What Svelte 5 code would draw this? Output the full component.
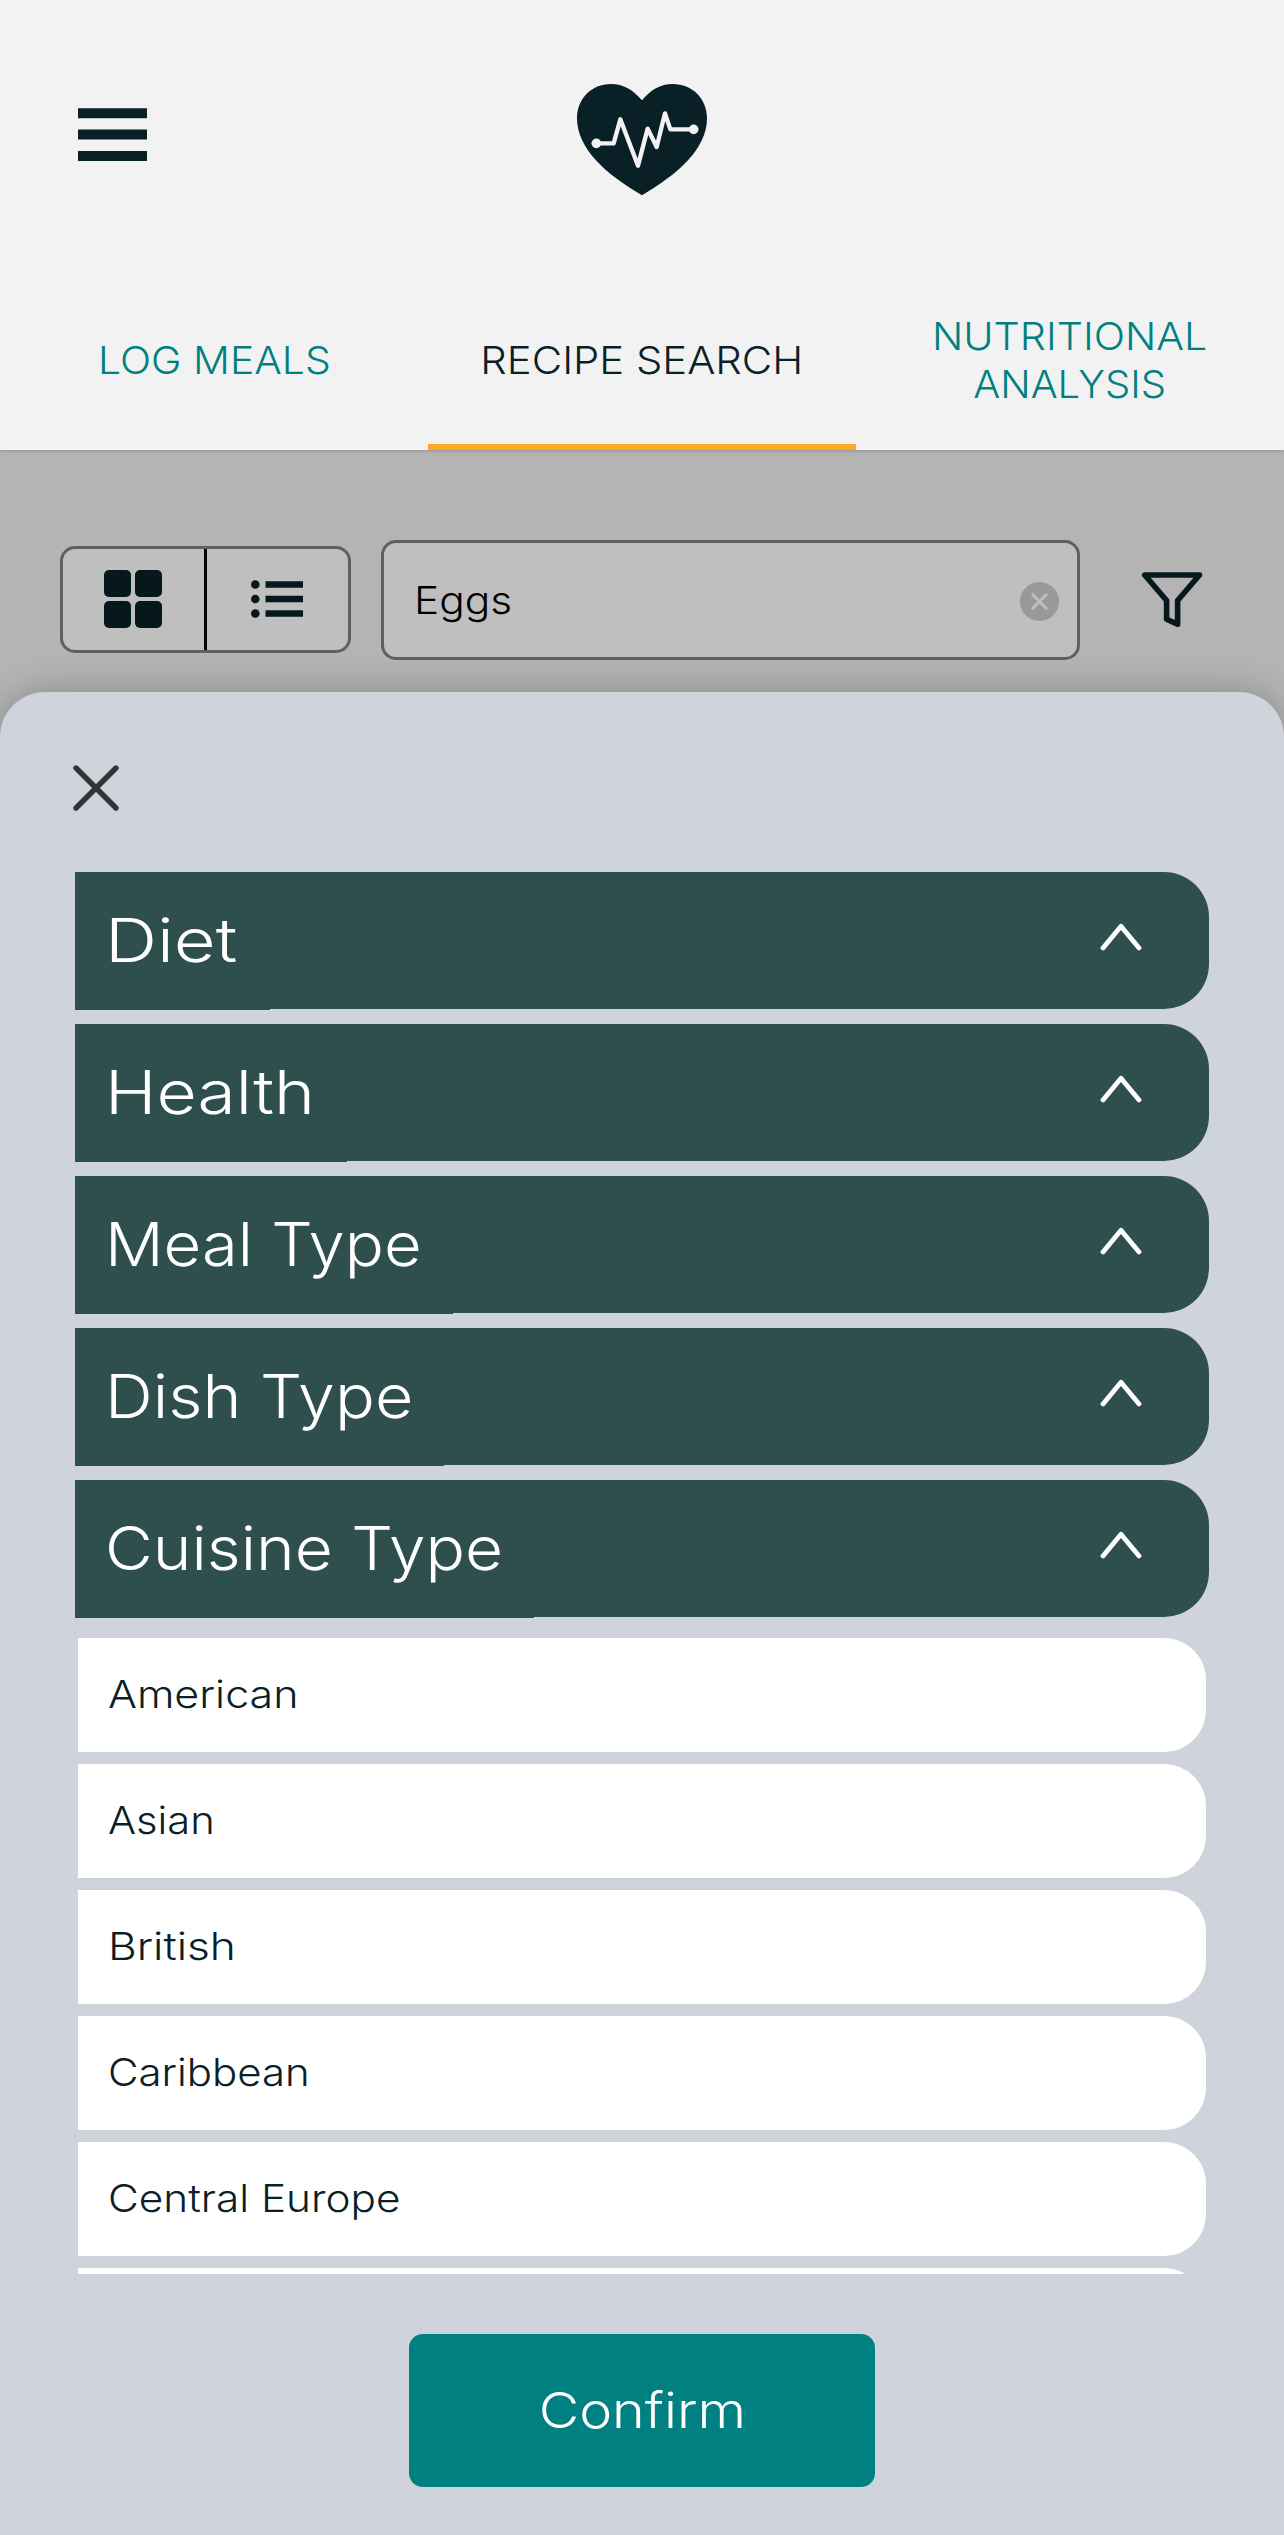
<script>
  // `stretch` widens each label horizontally; `width` is the title block's width
  const tabs = [
    { lines: [{ text: 'LOG MEALS', stretch: 1.063 }] },
    { lines: [{ text: 'RECIPE SEARCH', stretch: 1.085 }], active: true },
    { lines: [{ text: 'NUTRITIONAL', stretch: 1.07 }, { text: 'ANALYSIS', stretch: 1.04 }] }
  ];
  const sections = [
    { name: 'Diet', stretch: 1.185, width: 195 },
    { name: 'Health', stretch: 1.14, width: 272 },
    { name: 'Meal Type', stretch: 1.067, width: 378 },
    { name: 'Dish Type', stretch: 1.087, width: 369 },
    { name: 'Cuisine Type', stretch: 1.077, width: 459 }
  ];
  const cuisines = [
    { name: 'American', stretch: 1.115 },
    { name: 'Asian', stretch: 1.083 },
    { name: 'British', stretch: 1.15 },
    { name: 'Caribbean', stretch: 1.088 },
    { name: 'Central Europe', stretch: 1.098 }
  ];
</script>

<div class="page">
  <header>
    <div class="brand-row">
      <svg class="menu" width="69" height="54" viewBox="0 0 69 54">
        <path d="M0 .3h69v10H0zM0 21.5h69v10H0zM0 43h69v10H0z" />
      </svg>
      <svg class="heart" width="132" height="114" viewBox="438 129 396 342">
        <path
          class="shape"
          d="M636 181C610 150 580 132 543 132C485 132 441 176 441 235C441 327 530 404 636 466C742 404 831 327 831 235C831 176 787 132 728 132C692 132 661 150 636 181Z"
        />
        <path class="pulse" d="M499 310H551L571 238L624 377L653 266L680 321L705 220L721 268H791" />
        <circle cx="499" cy="310" r="14.5" />
        <circle cx="791" cy="268" r="14.5" />
      </svg>
    </div>
    <nav>
      {#each tabs as tab}
        <div class="tab" class:active={tab.active}>
          {#each tab.lines as line}
            <span style:--stretch={line.stretch}>{line.text}</span>
          {/each}
        </div>
      {/each}
    </nav>
  </header>

  <div class="toolbar">
    <div class="toggle">
      <div class="cell grid">
        <svg width="58" height="58" viewBox="0 0 58 58">
          <rect width="27" height="27" rx="5" />
          <rect x="31" width="27" height="27" rx="5" />
          <rect y="31" width="27" height="27" rx="5" />
          <rect x="31" y="31" width="27" height="27" rx="5" />
        </svg>
      </div>
      <div class="cell rows">
        <svg width="52" height="38" viewBox="0 0 52 38">
          <circle cx="4.3" cy="4.5" r="4.3" />
          <circle cx="4.3" cy="19" r="4.3" />
          <circle cx="4.3" cy="33.5" r="4.3" />
          <path d="M14.5 1.2H52v6.6H14.5zM14.5 15.7H52v6.6H14.5zM14.5 30.2H52v6.6H14.5z" />
        </svg>
      </div>
    </div>
    <div class="search">
      <span class="query">Eggs</span>
      <svg width="39" height="39" viewBox="0 0 39 39">
        <circle cx="19.5" cy="19.5" r="19.5" />
        <path d="M12.7 12.7l13.6 13.6M26.3 12.7L12.7 26.3" />
      </svg>
    </div>
    <svg class="funnel" width="62" height="58" viewBox="0 0 62 58">
      <path d="M3.7 4H58.5L36.6 29.5V53.3L25.6 48.3V29.5Z" />
    </svg>
  </div>

  <div class="sheet">
    <svg class="close" width="46" height="46" viewBox="0 0 46 46">
      <path d="M3 3L43 43M43 3L3 43" />
    </svg>
    <div class="list">
      {#each sections as section}
        <div class="section">
          <div class="title" style:width="{section.width}px">
            <span style:--stretch={section.stretch}>{section.name}</span>
          </div>
          <svg width="42" height="28" viewBox="0 0 42 28">
            <path d="M3 25L21 3.2L39 25" />
          </svg>
        </div>
      {/each}
      <div class="options">
        {#each cuisines as cuisine}
          <div class="option"><span style:--stretch={cuisine.stretch}>{cuisine.name}</span></div>
        {/each}
        <div class="option"></div>
      </div>
    </div>
    <div class="confirm"><span>Confirm</span></div>
  </div>
</div>

<style>
  :global(body) {
    margin: 0;
    background: #b4b4b4;
  }
  .page {
    width: 1284px;
    height: 2535px;
    display: flex;
    flex-direction: column;
    overflow: hidden;
    background: #b4b4b4;
    font-family: Inter, 'Liberation Sans', sans-serif;
    font-weight: 300;
    font-size: 38.5px;
    color: #0a2027;
  }
  svg {
    display: block;
    flex: none;
  }
  span {
    display: inline-block;
    white-space: nowrap;
    transform: scaleX(var(--stretch, 1));
    transform-origin: left center;
  }
  header {
    height: 450px;
    flex: none;
    background: #f2f2f2;
    box-shadow: 0 0 4px rgba(0, 0, 0, 0.3);
    z-index: 1;
  }
  .brand-row {
    height: 270px;
    display: grid;
    grid-template-columns: 1fr 132px 1fr;
    align-items: start;
  }
  .menu {
    margin: 108px 0 0 78px;
    fill: #0a2027;
  }
  .heart {
    margin-top: 83px;
  }
  .heart .shape {
    fill: #0a2027;
  }
  .heart circle {
    fill: #f2f2f2;
  }
  .heart .pulse {
    fill: none;
    stroke: #f2f2f2;
    stroke-width: 13;
    stroke-linejoin: round;
  }
  nav {
    height: 180px;
    display: grid;
    grid-template-columns: repeat(3, 1fr);
  }
  .tab {
    display: flex;
    flex-direction: column;
    align-items: center;
    justify-content: center;
    box-sizing: border-box;
    border-bottom: 6px solid transparent;
    padding-top: 6px;
    line-height: 48px;
    color: #008080;
  }
  .tab span,
  .confirm span {
    transform-origin: center;
  }
  .tab.active {
    color: #0a2027;
    border-color: #ffa726;
  }
  .toolbar {
    height: 242px;
    box-sizing: border-box;
    padding: 90px 81px 0 60px;
    flex: none;
    display: flex;
    align-items: flex-start;
  }
  .toggle {
    width: 291px;
    height: 107px;
    margin-top: 6px;
    box-sizing: border-box;
    border: 3px solid #606060;
    border-radius: 15px;
    background: #bfbfbf;
    display: flex;
    fill: #06181c;
  }
  .cell {
    width: 141px;
    box-sizing: border-box;
    padding-right: 2px;
    display: flex;
    align-items: center;
    justify-content: center;
  }
  .cell.grid {
    width: 144px;
    padding-right: 1px;
    padding-bottom: 1px;
    border-right: 3px solid #000;
  }
  .cell.rows {
    padding-bottom: 1px;
  }
  .search {
    width: 699px;
    height: 120px;
    margin-left: 30px;
    box-sizing: border-box;
    border: 3px solid #606060;
    border-radius: 15px;
    background: #bfbfbf;
    color: #000;
    padding: 2px 18px 0 30px;
    display: flex;
    align-items: center;
    justify-content: space-between;
  }
  .query {
    --stretch: 1.1;
    padding-bottom: 2px;
  }
  .search circle {
    fill: #999;
  }
  .search path {
    stroke: #bfbfbf;
    stroke-width: 3;
    stroke-linecap: round;
  }
  .funnel {
    margin: 31px 0 0 61px;
    fill: none;
    stroke: #06181c;
    stroke-width: 5.6;
    stroke-linejoin: round;
  }
  .sheet {
    flex: 1;
    display: flex;
    flex-direction: column;
    background: #cfd3db;
    border-radius: 45px 45px 0 0;
    box-shadow: 0 0 36px rgba(0, 0, 0, 0.24);
    padding: 73px 75px 0;
  }
  .close {
    margin-left: -2px;
    fill: none;
    stroke: #333;
    stroke-width: 5.4;
    stroke-linecap: round;
  }
  .list {
    height: 1402px;
    margin-top: 61px;
    overflow: hidden;
  }
  .section {
    height: 137px;
    margin-bottom: 15px;
    background: #2f4f4f;
    border-radius: 0 45px 45px 0;
    display: flex;
    justify-content: space-between;
    color: #fff;
    font-size: 61px;
  }
  .title {
    height: 138px;
    line-height: 137px;
    box-sizing: border-box;
    padding-left: 30px;
    background: #2f4f4f;
  }
  .section svg {
    margin: 51px 67px 0 0;
    fill: none;
    stroke: #fff;
    stroke-width: 4.8;
    stroke-linecap: round;
    stroke-linejoin: round;
  }
  .options {
    display: flex;
    flex-direction: column;
    gap: 6px;
    padding-top: 3px;
  }
  .option {
    height: 114px;
    flex: none;
    border: 3px solid #cfd3db;
    border-radius: 0 45px 45px 0;
    background: #fff;
    line-height: 113px;
    padding-left: 30px;
  }
  .confirm {
    --stretch: 1.135;
    width: 466px;
    height: 153px;
    margin: 60px auto 0;
    border-radius: 14px;
    background: #008080;
    color: #fff;
    display: flex;
    align-items: center;
    justify-content: center;
    font-size: 49px;
  }
</style>
